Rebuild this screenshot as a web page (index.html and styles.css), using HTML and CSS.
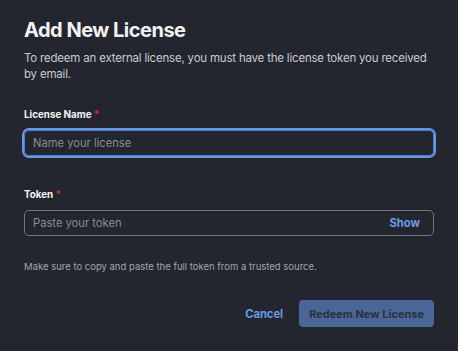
FILE: index.html
```html
<!DOCTYPE html>
<html lang="en">
<head>
    <meta charset="UTF-8">
    <meta name="viewport" content="width=device-width, initial-scale=1.0">
    <title>Add New License</title>
    <link rel="stylesheet" href="styles.css">
</head>
<body>
    <div class="dialog">
        <h1 class="dialog-title">Add New License</h1>
        <p class="dialog-desc">To redeem an external license, you must have the license token you received by email.</p>

        <div class="field">
            <label class="field-label" for="licenseName">License Name <span class="req">*</span></label>
            <div class="input-wrap focused">
                <input type="text" id="licenseName" placeholder="Name your license">
            </div>
        </div>

        <div class="field">
            <label class="field-label" for="token">Token <span class="req">*</span></label>
            <div class="input-wrap">
                <input type="password" id="token" placeholder="Paste your token">
                <button class="show-btn">Show</button>
            </div>
        </div>

        <p class="hint">Make sure to copy and paste the full token from a trusted source.</p>

        <div class="actions">
            <button class="link-btn">Cancel</button>
            <button class="primary-btn" disabled>Redeem New License</button>
        </div>
    </div>
</body>
</html>
```

FILE: styles.css
```css
* {
    margin: 0;
    padding: 0;
    box-sizing: border-box;
}

body {
    background-color: #23262e;
    font-family: Inter, 'Noto Sans', sans-serif;
    color: #f1f1f3;
}

.dialog {
    padding: 17px 24px 0;
}

.dialog-title {
    font-size: 20px;
    font-weight: 700;
    line-height: 26px;
    letter-spacing: -0.5px;
    color: #f2f2f4;
}

.dialog-desc {
    margin-top: 7px;
    font-size: 11.5px;
    line-height: 16px;
    letter-spacing: -0.2px;
    color: #c9cacf;
}

.field {
    margin-top: 26px;
}

.field + .field {
    margin-top: 32px;
}

.field-label {
    display: block;
    font-size: 9.8px;
    font-weight: 700;
    line-height: 14px;
    color: #f4f4f6;
    margin-bottom: 8px;
}

.req {
    color: #d8284f;
}

.input-wrap {
    display: flex;
    align-items: center;
    height: 26px;
    border: 1px solid #73767e;
    border-radius: 5px;
    padding: 0 13px 0 8px;
}

.input-wrap.focused {
    border-color: #4f7ed4;
    box-shadow: 0 0 0 2px #6a95e2;
}

.input-wrap input {
    flex: 1;
    min-width: 0;
    background: transparent;
    border: none;
    outline: none;
    font-family: inherit;
    font-size: 11.2px;
    color: #e8e8ea;
}

.input-wrap input::placeholder {
    color: #8a8d94;
}

.show-btn,
.link-btn {
    background: none;
    border: none;
    font-family: inherit;
    font-size: 11.2px;
    font-weight: 700;
    color: #6c9ae6;
    cursor: pointer;
}

.hint {
    margin-top: 24px;
    font-size: 9.5px;
    line-height: 14px;
    color: #a3a5ab;
}

.actions {
    display: flex;
    justify-content: flex-end;
    align-items: center;
    gap: 16px;
    margin-top: 26px;
}

.primary-btn {
    height: 27px;
    padding: 0 10px;
    background: #4a6699;
    border: none;
    border-radius: 4px;
    font-family: inherit;
    font-size: 11px;
    font-weight: 700;
    color: #2b303c;
}
```
